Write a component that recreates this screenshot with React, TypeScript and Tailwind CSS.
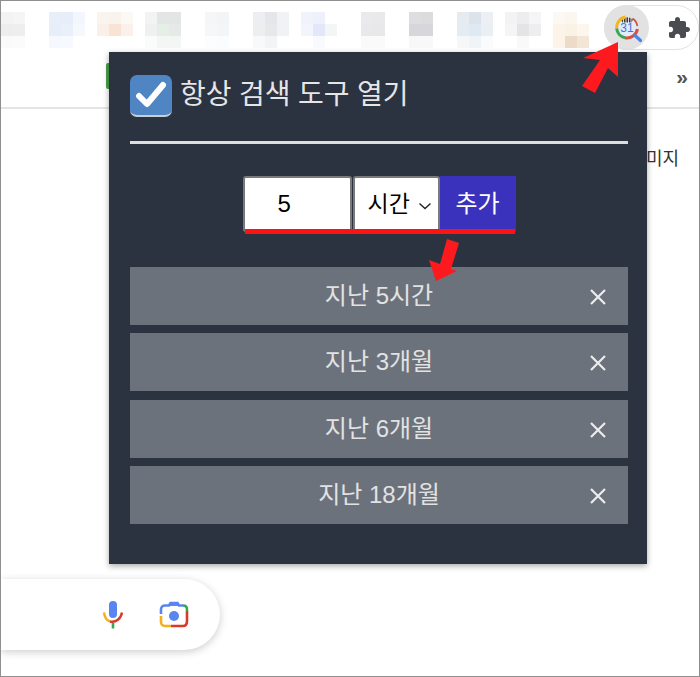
import React from 'react';

const FONT = "font-['Liberation_Sans','Noto_Sans_CJK_KR',sans-serif]";

// blurred bookmark tiles: [width in 12px cells, colours row by row]
const tiles: { gap: number; cols: number; cells: string[] }[] = [
  { gap: 0, cols: 2, cells: ['#f3f3f3', '#f5f5f5', '#ededed', '#eeeeee', '#fafafa', '#fbfbfb'] },
  { gap: 24, cols: 3, cells: ['#e8eff9', '#e6eef9', '#f3f7fd', '#e6eef9', '#e9f0fa', '#f5f8fd', '#f5f9fe', '#f6f9fe', '#ffffff'] },
  { gap: 12, cols: 3, cells: ['#fbf3ee', '#f9f3ee', '#fcf8f4', '#fbf0e8', '#f8e3d4', '#fbf1ea', '#ffffff', '#ffffff', '#ffffff'] },
  { gap: 12, cols: 3, cells: ['#f2f4f4', '#e3e6e4', '#e3e6e4', '#eff1f1', '#e6efe5', '#e6e9e7', '#fbfbfb', '#f3f6f4', '#f3f6f4'] },
  { gap: 24, cols: 2, cells: ['#f5f6f8', '#f2f4f6', '#f6f7f9', '#f4f5f7', '#fdfdfe', '#fbfcfd'] },
  { gap: 24, cols: 3, cells: ['#eceef1', '#e4e6e9', '#f1f2f3', '#eceef0', '#e6e8ea', '#f1f2f3', '#f9f9fa', '#f3f4f5', '#ffffff'] },
  { gap: 12, cols: 3, cells: ['#f0f3fc', '#eef1fb', '#ffffff', '#f2f5fc', '#e2e8f9', '#f4f6f5', '#ffffff', '#f9fafd', '#ffffff'] },
  { gap: 24, cols: 2, cells: ['#eaeaec', '#e9e9eb', '#e9e9eb', '#e8e8ea', '#fafafa', '#fafafa'] },
  { gap: 24, cols: 2, cells: ['#dedee0', '#dcdcde', '#d7d6da', '#d7d6da', '#f8f8f9', '#f8f8f9'] },
  { gap: 24, cols: 3, cells: ['#e6ebf0', '#dce3ec', '#ecf0f4', '#e4ecf3', '#dfe9f3', '#eaeff4', '#f5f7f9', '#f1f4f7', '#fafbfc'] },
  { gap: 12, cols: 3, cells: ['#f3f3f5', '#ecedee', '#f5f5f6', '#f5f5f6', '#e4e4e7', '#eeeef0', '#ffffff', '#f9f9fa', '#ffffff'] },
  { gap: 12, cols: 3, cells: ['#fcf8f3', '#fbf6ef', '#ffffff', '#fcf3e9', '#fbf2e6', '#fcf6ee', '#fdf3e9', '#ecdbc9', '#f4e6d6'] },
];

const ranges = ['지난 5시간', '지난 3개월', '지난 6개월', '지난 18개월'];

const CalendarSearchIcon = () => (
  <svg width="30" height="30" viewBox="0 0 30 30" fill="none">
    <circle cx="15" cy="14.5" r="9" fill="#e3eafa" />
    <path d="M9 6.5 A10 10 0 0 1 21 6.5 L19.5 9.5 H10.5 Z" fill="#3c4043" />
    <path d="M11.5 5 V10 M14 4 V10 M16.5 4 V10 M19 5 V10" stroke="#ffffff" strokeWidth="0.8" />
    <path d="M4.7 15.5 A10.5 10.5 0 0 1 13.5 4.1" stroke="#f3b61f" strokeWidth="3" />
    <path d="M20.5 5.5 A10.5 10.5 0 0 1 25.4 13" stroke="#d9503f" strokeWidth="1.8" />
    <path d="M4.7 15.5 A10.5 10.5 0 0 0 13 24.8" stroke="#3aa757" strokeWidth="3" />
    <path d="M13 24.8 A10.5 10.5 0 0 0 25.4 16" stroke="#d9503f" strokeWidth="3" />
    <text x="15" y="19" textAnchor="middle" fontSize="12" fill="#3f76dd" fontFamily="Liberation Sans">31</text>
    <path d="M23 22.5 L28.5 27.5" stroke="#4a86e8" strokeWidth="3.2" strokeLinecap="round" />
  </svg>
);

const PuzzleIcon = () => (
  <svg width="24" height="24" viewBox="0 0 24 24" fill="#4b4c4f">
    <path d="M20.5 11H19V7c0-1.1-.9-2-2-2h-4V3.5C13 2.12 11.88 1 10.5 1S8 2.12 8 3.5V5H4c-1.1 0-2 .9-2 2v3.8h1.5c1.49 0 2.7 1.21 2.7 2.7s-1.21 2.7-2.7 2.7H2V20c0 1.1.9 2 2 2h3.8v-1.5c0-1.49 1.21-2.7 2.7-2.7s2.7 1.21 2.7 2.7V22H17c1.1 0 2-.9 2-2v-4h1.5c1.38 0 2.5-1.12 2.5-2.5S21.88 11 20.5 11z" />
  </svg>
);

const MicIcon = () => (
  <svg width="22" height="30" viewBox="0 0 22 30" fill="none">
    <rect x="7" y="1" width="8" height="17" rx="4" fill="#5b85ee" />
    <path d="M2 12.5 C2.5 17 5 20.5 8 21.5" stroke="#f2b01e" strokeWidth="2.4" />
    <path d="M8 21.5 C14 23 19 18.5 20 12.5" stroke="#d93a2b" strokeWidth="2.4" />
    <path d="M11 23 V28.5" stroke="#38a852" strokeWidth="2.6" />
  </svg>
);

const CameraIcon = () => (
  <svg width="30" height="28" viewBox="0 0 30 28" fill="none">
    <path d="M2 13 V8.5 C2 6 3.5 4.5 6 4.5 H10 L11.5 2 H18.5 L20 4.5 H24" stroke="#5b85ee" strokeWidth="2.6" />
    <path d="M10 2.5 H20 V5 H10 Z" fill="#5b85ee" />
    <path d="M24 4.5 C26.5 4.5 28 6 28 8.5 V10" stroke="#38a852" strokeWidth="2.6" />
    <path d="M28 10 V20 C28 23 26.5 25 24 25 H12" stroke="#d93a2b" strokeWidth="2.6" />
    <path d="M12 25 H6 C3.5 25 2 23.5 2 21 V15" stroke="#f2b01e" strokeWidth="2.6" />
    <circle cx="15" cy="15" r="5" fill="#5b85ee" />
  </svg>
);

export default function App() {
  return (
    <div className={`relative h-[677px] w-[700px] overflow-hidden border border-[#8f8f8f] bg-white ${FONT}`}>
      {/* browser toolbar */}
      <div className="relative h-[48px] pt-[11px]">
        <div className="flex">
          {tiles.map((t, i) => (
            <div
              key={i}
              className={`grid shrink-0 ${t.cols === 2 ? 'w-[24px] grid-cols-2' : 'w-[36px] grid-cols-3'} ${
                t.gap === 24 ? 'ml-[24px]' : t.gap === 12 ? 'ml-[12px]' : ''
              }`}
            >
              {t.cells.map((c, j) => (
                <div key={j} className="h-[12px]" style={{ background: c }} />
              ))}
            </div>
          ))}
        </div>
        <div className="absolute right-0 top-[4px] flex h-[45px] w-[95px] items-center rounded-[23px] border border-[#e2e2e2] bg-white">
          <div className="-ml-px flex h-[45px] w-[45px] items-center justify-center rounded-full bg-[#e2e2e2]">
            <CalendarSearchIcon />
          </div>
          <div className="ml-[18px]">
            <PuzzleIcon />
          </div>
        </div>
      </div>

      {/* bookmarks bar */}
      <div className="flex h-[60px] items-center justify-between border-b-2 border-[#e4e4e4] pb-[4px] pl-[105px] pr-[11px]">
        <div className="h-[26px] w-[5px] rounded-l-[2px] bg-[#4aa04a]" />
        <span className="text-[21px] font-bold leading-none text-[#555]">»</span>
      </div>

      {/* page */}
      <div className="flex justify-end pr-[20px] pt-[36px]">
        <span className="text-[18px] leading-[28px] text-[#333]">미지</span>
      </div>

      <div className="mt-[406px] flex h-[71px] w-[219px] items-center justify-end rounded-r-[36px] bg-white pr-[31px] shadow-[0_2px_8px_rgba(0,0,0,0.2)]">
        <div className="mr-[35px]">
          <MicIcon />
        </div>
        <CameraIcon />
      </div>

      {/* extension popup */}
      <div className="absolute left-[108px] top-[51px] h-[512px] w-[538px] bg-[#2b3240] pl-[21px] pr-[19px] pt-[23px] shadow-[0_2px_6px_rgba(0,0,0,0.35)]">
        <div className="flex h-[42px] items-center">
          <div className="flex h-[42px] w-[42px] items-center justify-center rounded-[7px] border-b-2 border-[#c8ced6] bg-[#5085c4]">
            <svg width="32" height="28" viewBox="0 0 32 28" fill="none">
              <path d="M4 15 L12 23 L28 4" stroke="#fff" strokeWidth="6" strokeLinecap="round" strokeLinejoin="round" />
            </svg>
          </div>
          <span className="ml-[8px] -mt-[3px] text-[28px] leading-none tracking-[-0.1px] text-[#e6e6e6]">항상 검색 도구 열기</span>
        </div>
        <div className="mt-[24px] h-[3px] bg-[#dedede]" />

        <div className="relative mt-[32px] flex h-[56px] justify-center">
          <div className="flex h-[56px] w-[109px] items-center rounded-[3px] border-2 border-[#7a7a7a] bg-white pl-[33px] text-[24px] text-black">
            5
          </div>
          <div className="ml-px flex h-[56px] w-[87px] items-center gap-[8px] rounded-[3px] border-2 border-[#7a7a7a] bg-white pl-[13px] text-[23px] text-black">
            시간
            <svg className="mt-[3px]" width="14" height="8" viewBox="0 0 14 8" fill="none">
              <path d="M1.5 1.5 L7 6.5 L12.5 1.5" stroke="#222" strokeWidth="1.4" />
            </svg>
          </div>
          <button className="flex h-[56px] w-[76px] items-center justify-center bg-[#3a32bd] pb-[1px] text-[24px] text-white">
            추가
          </button>
          {/* red underline annotation */}
          <div className="absolute bottom-[-2px] left-[115px] h-[5px] w-[270px] bg-[#fc1414]" />
        </div>

        <div className="mt-[35px] flex flex-col gap-[8.3px]">
          {ranges.map((r) => (
            <div key={r} className="relative flex h-[58px] items-center justify-center bg-[#6c727c] text-[24px] text-[#e2e2e2]">
              {r}
              <svg className="absolute right-[21px] top-[21px]" width="18" height="18" viewBox="0 0 18 18" fill="none">
                <path d="M2 2 L16 16 M16 2 L2 16" stroke="#ececec" strokeWidth="2.2" />
              </svg>
            </div>
          ))}
        </div>
      </div>

      {/* annotation arrows */}
      <svg className="absolute left-[579px] top-[39px]" width="40" height="55" viewBox="0 0 40 55" fill="#fc1a1f">
        <path d="M38 2 L38 37 L28 28 L15 53 L2 46 L20 20 L3 18 Z" />
      </svg>
      <svg className="absolute left-[427px] top-[237px]" width="32" height="44" viewBox="0 0 32 44" fill="#fc1a1f">
        <path d="M19 1 L31 5 L23 31 L29 33 L8 43 L1 22 L12 26 Z" />
      </svg>
    </div>
  );
}
